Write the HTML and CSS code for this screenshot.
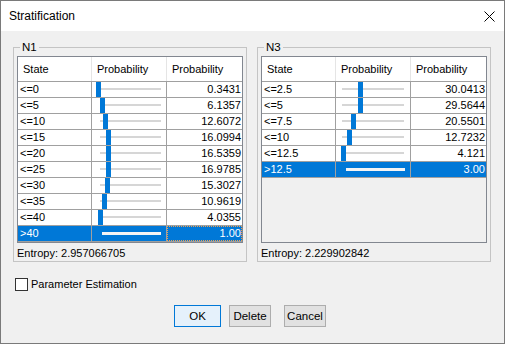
FILE: index.html
```
<!DOCTYPE html>
<html>
<head>
<meta charset="utf-8">
<link rel="stylesheet" href="styles.css">
</head>
<body>
<div class="window">
  <div class="titlebar">
    <span class="title">Stratification</span>
    <svg class="close" width="11" height="11" viewBox="0 0 11 11"><path d="M0.5 0.5 L10.5 10.5 M10.5 0.5 L0.5 10.5" stroke="#000" stroke-width="1" fill="none"/></svg>
  </div>
  <div class="content">
    <div class="groups">
      <fieldset class="group">
        <legend>N1</legend>
        <div class="grid">
          <div class="row head"><div class="c c1">State</div><div class="c c2">Probability</div><div class="c c3">Probability</div></div>
          <div class="row"><div class="c c1">&lt;=0</div><div class="c c2 bar"><span class="track"></span><span class="thumb" style="left:4.2px"></span></div><div class="c c3 num">0.3431</div></div>
          <div class="row"><div class="c c1">&lt;=5</div><div class="c c2 bar"><span class="track"></span><span class="thumb" style="left:7.7px"></span></div><div class="c c3 num">6.1357</div></div>
          <div class="row"><div class="c c1">&lt;=10</div><div class="c c2 bar"><span class="track"></span><span class="thumb" style="left:11.3px"></span></div><div class="c c3 num">12.6072</div></div>
          <div class="row"><div class="c c1">&lt;=15</div><div class="c c2 bar"><span class="track"></span><span class="thumb" style="left:13.7px"></span></div><div class="c c3 num">16.0994</div></div>
          <div class="row"><div class="c c1">&lt;=20</div><div class="c c2 bar"><span class="track"></span><span class="thumb" style="left:13.9px"></span></div><div class="c c3 num">16.5359</div></div>
          <div class="row"><div class="c c1">&lt;=25</div><div class="c c2 bar"><span class="track"></span><span class="thumb" style="left:14.2px"></span></div><div class="c c3 num">16.9785</div></div>
          <div class="row"><div class="c c1">&lt;=30</div><div class="c c2 bar"><span class="track"></span><span class="thumb" style="left:13px"></span></div><div class="c c3 num">15.3027</div></div>
          <div class="row"><div class="c c1">&lt;=35</div><div class="c c2 bar"><span class="track"></span><span class="thumb" style="left:10.3px"></span></div><div class="c c3 num">10.9619</div></div>
          <div class="row"><div class="c c1">&lt;=40</div><div class="c c2 bar"><span class="track"></span><span class="thumb" style="left:6.2px"></span></div><div class="c c3 num">4.0355</div></div>
          <div class="row sel"><div class="c c1">&gt;40</div><div class="c c2 bar"><span class="track"></span></div><div class="c c3 num focus">1.00</div></div>
        </div>
        <div class="entropy">Entropy: 2.957066705</div>
      </fieldset>
      <fieldset class="group">
        <legend>N3</legend>
        <div class="grid alt">
          <div class="row head"><div class="c c1">State</div><div class="c c2">Probability</div><div class="c c3">Probability</div></div>
          <div class="row"><div class="c c1">&lt;=2.5</div><div class="c c2 bar"><span class="track"></span><span class="thumb" style="left:22px"></span></div><div class="c c3 num">30.0413</div></div>
          <div class="row"><div class="c c1">&lt;=5</div><div class="c c2 bar"><span class="track"></span><span class="thumb" style="left:21.5px"></span></div><div class="c c3 num">29.5644</div></div>
          <div class="row"><div class="c c1">&lt;=7.5</div><div class="c c2 bar"><span class="track"></span><span class="thumb" style="left:15px"></span></div><div class="c c3 num">20.5501</div></div>
          <div class="row"><div class="c c1">&lt;=10</div><div class="c c2 bar"><span class="track"></span><span class="thumb" style="left:10.5px"></span></div><div class="c c3 num">12.7232</div></div>
          <div class="row"><div class="c c1">&lt;=12.5</div><div class="c c2 bar"><span class="track"></span><span class="thumb" style="left:5px"></span></div><div class="c c3 num">4.121</div></div>
          <div class="row sel"><div class="c c1">&gt;12.5</div><div class="c c2 bar"><span class="track"></span></div><div class="c c3 num">3.00</div></div>
        </div>
        <div class="entropy">Entropy: 2.229902842</div>
      </fieldset>
    </div>
    <label class="check"><span class="box"></span><span class="check-label">Parameter Estimation</span></label>
    <div class="buttons">
      <button class="btn ok">OK</button>
      <button class="btn delete">Delete</button>
      <button class="btn cancel">Cancel</button>
    </div>
  </div>
</div>
</body>
</html>
```
FILE: styles.css
```
* { box-sizing: border-box; }
html, body { margin: 0; padding: 0; }
body {
  width: 505px;
  height: 344px;
  overflow: hidden;
  font-family: "Liberation Sans", Arial, sans-serif;
  font-size: 11px;
  color: #000;
}
.window {
  width: 505px;
  height: 344px;
  border: 1px solid #7a7a7a;
  background: #f0f0f0;
  display: flex;
  flex-direction: column;
}
.titlebar {
  height: 30px;
  background: #fff;
  display: flex;
  align-items: center;
  justify-content: space-between;
  padding: 0 9px 0 8px;
  flex-shrink: 0;
}
.title { font-size: 12px; line-height: 16px; }
.close { display: block; margin-top: 1px; }
.content {
  padding: 8px 13px 0 12px;
  flex: 1;
}
.groups {
  display: flex;
  gap: 10px;
}
.group {
  width: 234px;
  margin: 0;
  padding: 1px 3px 0 3px;
  border: 1px solid #c4c4c4;
  min-width: 0;
}
.group legend {
  margin-left: 3px;
  padding: 0 2px 0 2px;
  line-height: 16px;
  font-size: 11.5px;
}
.grid {
  width: 226px;
  height: 187px;
  border: 1px solid #828790;
  background: #f0f0f0;
}
.row {
  display: flex;
  height: 16px;
  border-bottom: 1px solid #a0a0a0;
  background: #fff;
}
.row.head {
  height: 25px;
}
.c {
  height: 100%;
  border-right: 1px solid #a0a0a0;
  line-height: 15px;
  padding-left: 2px;
  white-space: nowrap;
  overflow: hidden;
}
.head .c {
  line-height: 25px;
  padding-left: 5px;
  border-right-color: #e5e5e5;
}
.c1 { width: 74px; }
.c2 { width: 75px; }
.c3 { width: 75px; border-right: none; }
.head .c3 { border-right: none; }
.num { text-align: right; padding-right: 1px; }
.bar { position: relative; }
.track {
  position: absolute;
  left: 8px;
  width: 61px;
  top: 6px;
  height: 2px;
  background: #d6d6d6;
}
.alt .track { left: 6px; width: 62px; }
.thumb {
  position: absolute;
  top: 0;
  width: 5px;
  height: 15px;
  background: #0078d7;
}
.row.sel { background: #0078d7; color: #fff; }
.row.sel .track {
  left: 10px;
  width: 59px;
  top: 6px;
  height: 3px;
  background: #f4f4f4;
}
.focus {
  outline: 1px dotted #f0a050;
  outline-offset: -1px;
}
.entropy {
  margin-top: 2px;
  line-height: 16px;
  padding-left: 0;
}
.check {
  display: flex;
  align-items: center;
  margin-top: 14px;
  padding-left: 2px;
  height: 16px;
}
.box {
  width: 13px;
  height: 13px;
  border: 1px solid #333;
  background: #fff;
  flex-shrink: 0;
}
.check-label { margin-left: 3px; line-height: 16px; }
.buttons {
  display: flex;
  margin-top: 13px;
  padding-left: 161px;
}
.btn {
  height: 22px;
  font-family: inherit;
  font-size: 11.5px;
  color: #000;
  padding: 0;
  margin: 0;
  border: 1px solid #adadad;
  background: #e1e1e1;
  width: 42px;
}
.btn.ok {
  width: 47px;
  border-color: #0078d7;
  background: #e5f1fb;
}
.btn.delete { margin-left: 8px; }
.btn.cancel { margin-left: 13px; }
```
